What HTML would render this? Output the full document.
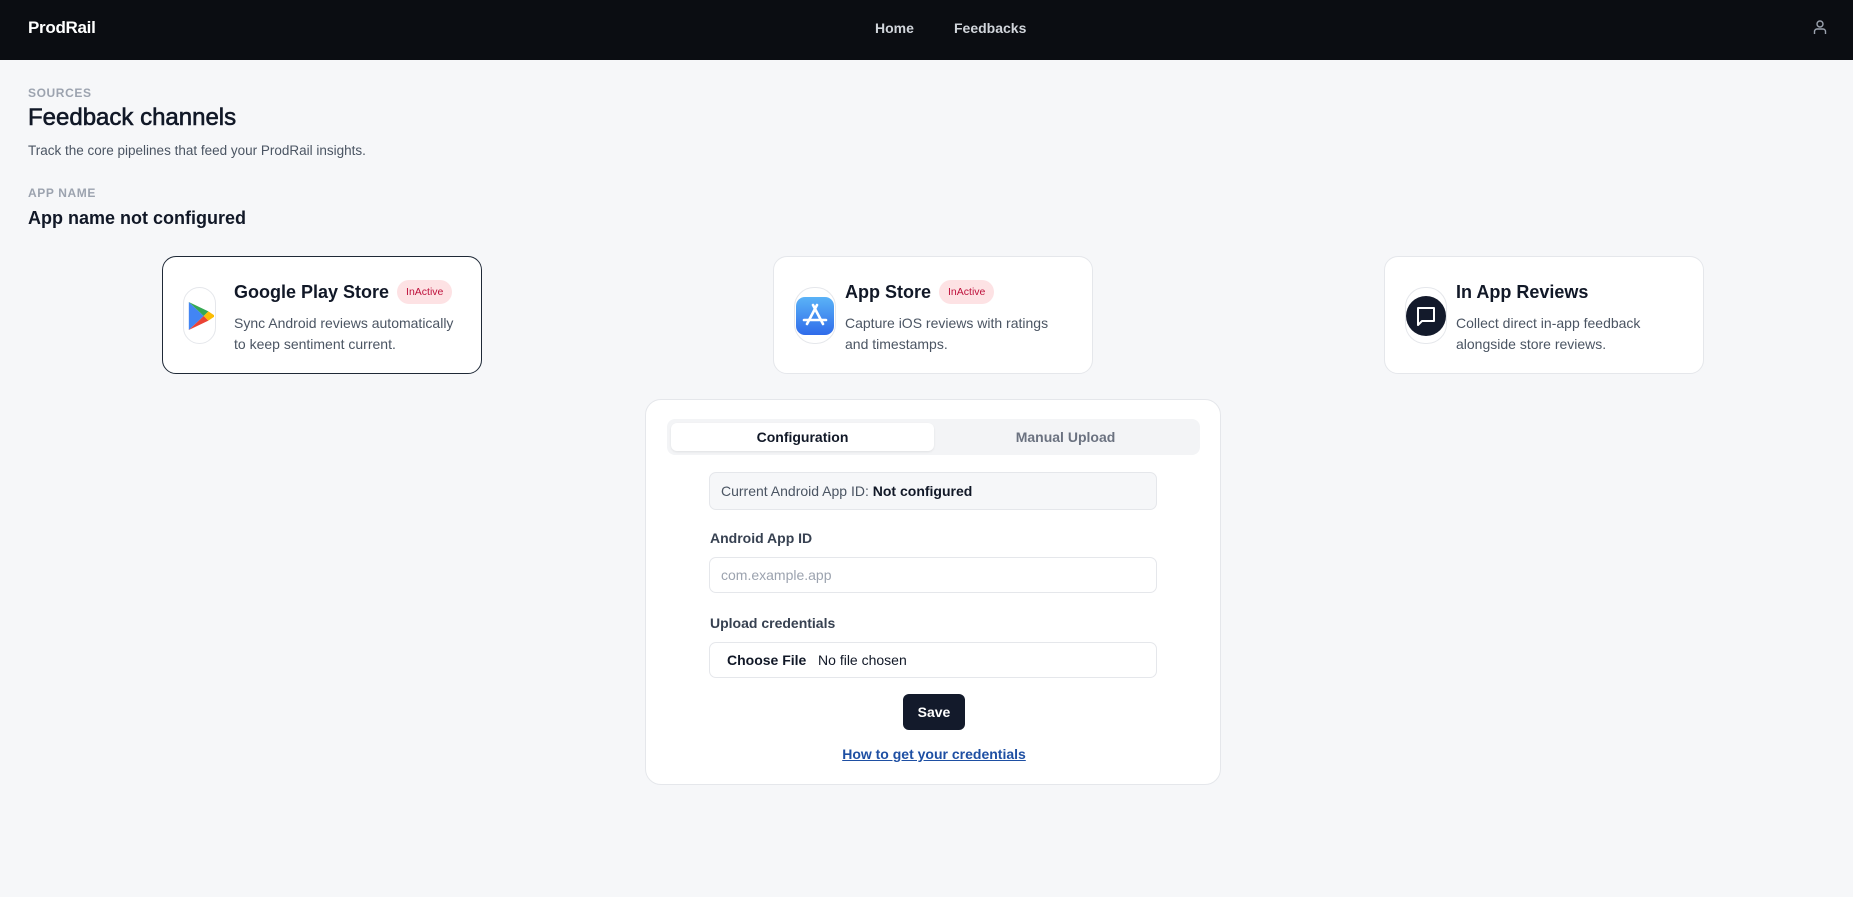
<!DOCTYPE html>
<html><head><meta charset="utf-8"><style>
*{box-sizing:border-box;margin:0;padding:0}
body{width:1853px;height:897px;background:#f6f7f9;font-family:"Liberation Sans",sans-serif;color:#111827;position:relative;overflow:hidden}
.nav{position:absolute;left:0;top:0;width:1853px;height:60px;background:#0b0d12}
.brand{position:absolute;left:28px;top:18px;color:#fff;font-weight:700;font-size:17px;letter-spacing:-0.3px}
.nl{position:absolute;top:20px;color:#d1d5db;font-size:14px;font-weight:700}
.ab{position:absolute}
.cap{font-size:12px;color:#9ca3af;font-weight:700;letter-spacing:0.6px}
.card{position:absolute;top:256px;width:320px;height:118px;background:#fff;border:1px solid #e5e7eb;border-radius:14px}
.card.sel{border:1.5px solid #1f2937}
.ic{position:absolute;left:20px;top:30px;width:40px;height:57px;border:1px solid #e5e7eb;border-radius:20px;display:flex;align-items:center;justify-content:center}
.ct{position:absolute;left:71px;top:22px;height:26px;font-size:18px;font-weight:700;color:#111827;display:flex;align-items:center;white-space:nowrap}
.badge{margin-left:8px;background:#fde2e4;color:#be123c;font-size:10.5px;font-weight:400;padding:0 9px;height:24px;line-height:24px;border-radius:12px}
.cd{position:absolute;left:71px;top:56px;font-size:14px;line-height:21px;color:#4b5563;width:222px}
.panel{position:absolute;left:645px;top:399px;width:576px;height:386px;background:#fff;border:1px solid #e5e7eb;border-radius:16px}
.tabs{position:absolute;left:21px;top:19px;width:533px;height:36px;background:#f3f4f6;border-radius:8px}
.tab{position:absolute;top:4px;height:28px;width:263px;text-align:center;line-height:28px;font-size:14px;font-weight:700}
.box{position:absolute;left:63px;width:448px;border:1px solid #e5e7eb;border-radius:7px;font-size:14px}
.lbl{position:absolute;left:64px;font-size:14px;font-weight:700;color:#374151}
</style></head><body>
<div class="nav">
<div class="brand">ProdRail</div>
<div class="nl" style="left:875px">Home</div>
<div class="nl" style="left:954px">Feedbacks</div>
<svg class="ab" style="left:1813px;top:19px" width="14" height="16" viewBox="0 0 14 16" fill="none" stroke="#9ca3af" stroke-width="1.4"><circle cx="7" cy="5" r="3"/><path d="M1.5 15v-2.5a2.5 2.5 0 0 1 2.5-2.5h6a2.5 2.5 0 0 1 2.5 2.5V15"/></svg>
</div>
<div class="ab cap" style="left:28px;top:86px">SOURCES</div>
<div class="ab" style="left:28px;top:104px;font-size:24px;font-weight:400;color:#111827;-webkit-text-stroke:0.6px #111827">Feedback channels</div>
<div class="ab" style="left:28px;top:143px;font-size:13.5px;color:#4b5563">Track the core pipelines that feed your ProdRail insights.</div>
<div class="ab cap" style="left:28px;top:186px">APP NAME</div>
<div class="ab" style="left:28px;top:208px;font-size:18px;font-weight:700">App name not configured</div>

<div class="card sel" style="left:162px">
<div class="ic" style="width:33px"><svg width="28" height="32" viewBox="0 0 30 34"><path d="M3 2 L19 17 L3 32 Z" fill="#4285f4"/><path d="M3 2 L19 17 L24 12 Z" fill="#34a853"/><path d="M3 32 L19 17 L24 22 Z" fill="#ea4335"/><path d="M24 12 L30 16 Q31 17 30 18 L24 22 L19 17 Z" fill="#fbbc04"/></svg></div>
<div class="ct">Google Play Store<span class="badge">InActive</span></div>
<div class="cd">Sync Android reviews automatically to keep sentiment current.</div>
</div>
<div class="card" style="left:773px">
<div class="ic" style="width:42px"><svg width="38" height="38" viewBox="0 0 38 38"><defs><linearGradient id="g" x1="0" y1="0" x2="0" y2="1"><stop offset="0" stop-color="#5ab3f7"/><stop offset="1" stop-color="#2f6bea"/></linearGradient></defs><rect width="38" height="38" rx="9" fill="url(#g)"/><g stroke="#fff" stroke-width="2.6" stroke-linecap="round" fill="none"><path d="M21 8 L11 27"/><path d="M17 8 L27 27"/><path d="M8 23 H30"/></g></svg></div>
<div class="ct">App Store<span class="badge">InActive</span></div>
<div class="cd" style="width:215px">Capture iOS reviews with ratings and timestamps.</div>
</div>
<div class="card" style="left:1384px">
<div class="ic" style="width:42px"><svg width="40" height="40" viewBox="0 0 40 40"><circle cx="20" cy="20" r="20" fill="#131a2b"/><path d="M12 12 H28 V25 H16 L12 29 Z" fill="none" stroke="#fff" stroke-width="2" stroke-linejoin="round"/></svg></div>
<div class="ct">In App Reviews</div>
<div class="cd">Collect direct in-app feedback alongside store reviews.</div>
</div>

<div class="panel">
<div class="tabs">
<div class="tab" style="left:4px;background:#fff;border-radius:6px;box-shadow:0 1px 2px rgba(0,0,0,.08);color:#111827">Configuration</div>
<div class="tab" style="left:267px;color:#6b7280">Manual Upload</div>
</div>
<div class="box" style="top:72px;height:38px;background:#f6f7f9;line-height:36px;padding-left:11px;color:#4b5563">Current Android App ID: <b style="color:#111827">Not configured</b></div>
<div class="lbl" style="top:130px">Android App ID</div>
<div class="box" style="top:157px;height:36px;line-height:34px;padding-left:11px;color:#9ca3af">com.example.app</div>
<div class="lbl" style="top:215px">Upload credentials</div>
<div class="box" style="top:242px;height:36px;line-height:34px;padding-left:17px;color:#111827"><b>Choose File</b>&nbsp;&nbsp; No file chosen</div>
<div class="ab" style="left:257px;top:294px;width:62px;height:36px;background:#131a2b;border-radius:6px;color:#fff;font-weight:700;font-size:14px;text-align:center;line-height:36px">Save</div>
<div class="ab" style="left:0;width:576px;top:346px;text-align:center;font-size:14px;font-weight:700;color:#1e4fa3;text-decoration:underline">How to get your credentials</div>
</div>
</body></html>
